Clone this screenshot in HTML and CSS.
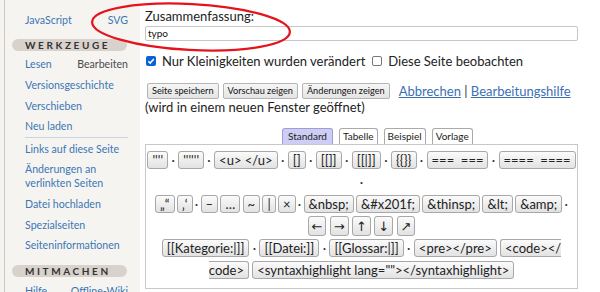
FILE: index.html
```html
<!DOCTYPE html>
<html lang="de">
<head>
<meta charset="utf-8">
<title>Bearbeiten</title>
<link rel="stylesheet" href="styles.css">
</head>
<body>
<div class="page">
  <aside class="sidebar">
    <ul class="links">
      <li class="pair"><a href="#">JavaScript</a><a href="#">SVG</a></li>
    </ul>
    <h3 class="portal-h">Werkzeuge</h3>
    <ul class="links">
      <li class="pair"><a href="#">Lesen</a><span class="sel">Bearbeiten</span></li>
      <li><a href="#">Versionsgeschichte</a></li>
      <li><a href="#">Verschieben</a></li>
      <li><a href="#">Neu laden</a></li>
      <li class="sep"><a href="#">Links auf diese Seite</a></li>
      <li><a href="#">Änderungen an verlinkten Seiten</a></li>
      <li><a href="#">Datei hochladen</a></li>
      <li><a href="#">Spezialseiten</a></li>
      <li><a href="#">Seiteninformationen</a></li>
    </ul>
    <h3 class="portal-h portal-h2">Mitmachen</h3>
    <ul class="links">
      <li class="pair"><a href="#">Hilfe</a><a href="#">Offline-Wiki</a></li>
    </ul>
  </aside>
  <main class="content">
    <div class="summary-label">Zusammenfassung:</div>
    <div class="summary-input">typo</div>
    <div class="checks">
      <svg class="cb" viewBox="0 0 10 10" width="10" height="10"><rect x="0" y="0" width="10" height="10" rx="2" fill="#0b62d6"/><path d="M2.3 5.2 L4.2 7.1 L7.8 3.1" fill="none" stroke="#fff" stroke-width="1.5"/></svg>
      <span>Nur Kleinigkeiten wurden verändert</span>
      <span class="cb cb-empty"></span>
      <span>Diese Seite beobachten</span>
    </div>
    <div class="actions">
      <span class="btn">Seite speichern</span>
      <span class="btn">Vorschau zeigen</span>
      <span class="btn">Änderungen zeigen</span>
      <span class="act-links"><a href="#">Abbrechen</a> | <a href="#">Bearbeitungshilfe</a></span>
    </div>
    <div class="hint">(wird in einem neuen Fenster geöffnet)</div>
    <div class="tabs">
      <span class="tab active">Standard</span>
      <span class="tab">Tabelle</span>
      <span class="tab">Beispiel</span>
      <span class="tab">Vorlage</span>
    </div>
    <div class="charbox">
      <div class="row"><span class="ci">&#39;&#39;&#39;&#39;</span> · <span class="ci">&#39;&#39;&#39;&#39;&#39;&#39;</span> · <span class="ci">&lt;u&gt; &lt;/u&gt;</span> · <span class="ci">[]</span> · <span class="ci">[[]]</span> · <span class="ci">[[|]]</span> · <span class="ci">{{}}</span> · <span class="ci">===&nbsp;&nbsp;===</span> · <span class="ci">====&nbsp;&nbsp;====</span></div>
      <div class="row">·</div>
      <div class="row tight"><span class="ci">„“</span> <span class="ci">‚‘</span> · <span class="ci">–</span> <span class="ci">…</span> <span class="ci">~</span> <span class="ci">|</span> <span class="ci">×</span> · <span class="ci">&amp;nbsp;</span> <span class="ci">&amp;#x201f;</span> <span class="ci">&amp;thinsp;</span> <span class="ci">&amp;lt;</span> <span class="ci">&amp;amp;</span> ·</div>
      <div class="row"><span class="ci arrow">←</span> <span class="ci arrow">→</span> <span class="ci arrow">↑</span> <span class="ci arrow">↓</span> <span class="ci arrow">↗</span></div>
      <div class="row"><span class="ci">[[Kategorie:|]]</span> · <span class="ci">[[Datei:]]</span> · <span class="ci">[[Glossar:|]]</span> · <span class="ci">&lt;pre&gt;&lt;/pre&gt;</span> <span class="ci cut-r">&lt;code&gt;&lt;/</span></div>
      <div class="row"><span class="ci cut-l">code&gt;</span> <span class="ci">&lt;syntaxhighlight lang=""&gt;&lt;/syntaxhighlight&gt;</span></div>
    </div>
  </main>
</div>
<svg class="annot" width="600" height="292" viewBox="0 0 600 292"><ellipse cx="191" cy="27" rx="99" ry="23" transform="rotate(3 191 27)" fill="none" stroke="#e3141c" stroke-width="2.2"/></svg>
</body>
</html>
```
FILE: styles.css
```css
* { box-sizing: border-box; }
html, body { margin: 0; padding: 0; }
body {
  width: 600px;
  height: 292px;
  overflow: hidden;
  position: relative;
  background: #fff;
  font-family: Lato, "Open Sans", "DejaVu Sans", sans-serif;
  color: #222;
}
a { color: #3a77b4; text-decoration: none; }

.page { display: flex; height: 292px; background: #f6f4f1; }

.sidebar {
  width: 136px;
  margin-left: 4px;
  border-left: 1px solid #cbc8c4;
  background: #f6f4f1;
  padding-top: 9.5px;
  font-size: 10.6px;
  flex-shrink: 0;
}
.links { list-style: none; margin: 0; padding: 0 12px 0 20px; }
.links li { line-height: 14px; padding: 3.3px 0; }
.pair { display: flex; justify-content: space-between; }
.sel { color: #4a4a4a; }
.sep { border-top: 1px solid #c9d6e2; margin-top: 1px; }

.portal-h {
  margin: 8.5px 13px 3.5px 7px;
  height: 12px;
  line-height: 12px;
  border-radius: 6px;
  background: #d9d2cc;
  font-size: 10px;
  font-weight: 700;
  letter-spacing: 2.6px;
  text-transform: uppercase;
  padding-left: 13px;
  color: #333;
}
.portal-h2 { margin-top: 10px; }

.content {
  flex: 1;
  min-width: 0;
  background: #fff;
  padding: 8px 22px 0 5px;
  font-size: 13px;
}
.summary-label { line-height: 17px; }
.summary-input {
  margin-top: 1px;
  height: 15px;
  border: 1px solid #c6c6c6;
  border-radius: 2px;
  font-size: 10px;
  line-height: 13px;
  padding-left: 2px;
  color: #111;
}
.checks {
  margin-top: 10px;
  height: 20px;
  display: flex;
  align-items: center;
  white-space: nowrap;
}
.cb { width: 10px; height: 10px; margin: 0 6px 0 1px; flex-shrink: 0; }
.cb-empty {
  display: inline-block;
  border: 1px solid #777;
  border-radius: 2px;
  background: #fff;
  margin-left: 7px;
}
.actions {
  margin-top: 12px;
  height: 16px;
  display: flex;
  align-items: center;
  white-space: nowrap;
}
.btn {
  flex-shrink: 0;
  font-size: 9.2px;
  line-height: 14px;
  height: 16px;
  padding: 0 4px;
  border: 1px solid #b4b4b4;
  border-radius: 2px;
  background: linear-gradient(#f6f6f6, #e4e4e4);
  margin-right: 4px;
  color: #111;
}
.btn:first-child { margin-left: 2px; }
.act-links { flex-shrink: 0; margin-left: 5px; color: #333; }
.act-links a { color: #3b6fb3; text-decoration: underline; }
.hint { line-height: 16px; }

.tabs {
  margin-top: 13px;
  display: flex;
  gap: 6px;
  padding-left: 137px;
  height: 16px;
}
.tab {
  height: 16px;
  font-size: 10px;
  line-height: 15px;
  padding: 0 3px;
  border: 1px solid #aaa;
  border-bottom: none;
  border-radius: 3px 3px 0 0;
  background: #fff;
}
.tab.active { background: #cdcdf6; border-color: #9e9ed4; padding: 0 5px; }

.charbox {
  height: 145px;
  border: 1px solid #c8c8c8;
  padding-top: 4px;
  text-align: center;
  font-size: 13px;
  line-height: 22px;
  color: #333;
}
.row.tight { word-spacing: -1px; }
.ci {
  border: 1px solid #a8a8a8;
  border-radius: 3px;
  background: linear-gradient(#fbfbfb, #e2e2e2);
  padding: 0 4px;
  color: #222;
  word-spacing: normal;
}
.ci.arrow { font-family: "Noto Sans", "DejaVu Sans", sans-serif; padding: 0 3px; }
.cut-r { border-right: none; border-radius: 3px 0 0 3px; padding-right: 0; }
.cut-l { border-left: none; border-radius: 0 3px 3px 0; padding-left: 0; }

.annot { position: absolute; left: 0; top: 0; pointer-events: none; }
```
